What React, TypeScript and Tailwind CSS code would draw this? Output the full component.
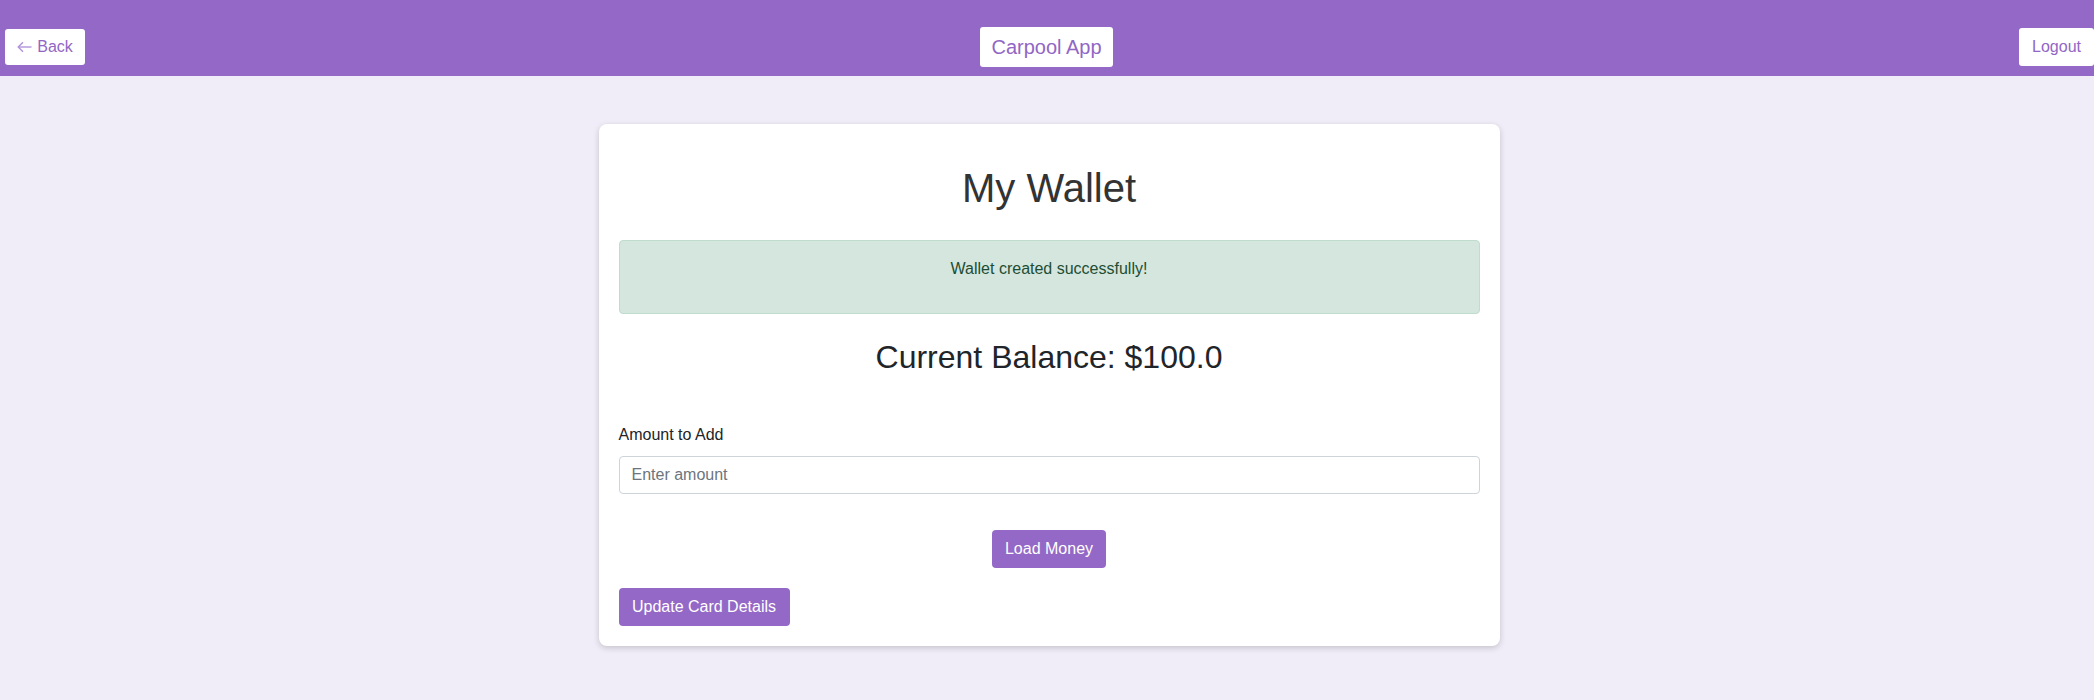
import React from "react";

export default function App() {
  const font = { fontFamily: '"Liberation Sans", Arial, Helvetica, sans-serif' };
  return (
    <div className="min-h-[700px] bg-[#f0edf8]" style={font}>
      <header className="h-[76px] bg-[#9368c6] grid grid-cols-[1fr_auto_1fr] items-center pt-[18px] pl-[5px] pr-0">
        <div className="flex justify-start">
          <button className="h-[36px] w-[80px] bg-white rounded-[3px] text-[#9166c5] text-[16px] flex items-center justify-center gap-[5px]">
            <svg width="15" height="12" viewBox="0 0 15 12" fill="none" stroke="#b392dc" strokeWidth="1.4">
              <path d="M14.5 6H1.2" />
              <path d="M6 1.2L1.2 6L6 10.8" />
            </svg>
            <span>Back</span>
          </button>
        </div>
        <div className="h-[40px] w-[133px] mr-[6px] bg-white rounded-[3px] text-[#9166c5] text-[20px] flex items-center justify-center">
          Carpool App
        </div>
        <div className="flex justify-end">
          <button className="h-[38px] w-[75px] bg-white rounded-[3px] text-[#9166c5] text-[16px] flex items-center justify-center">
            Logout
          </button>
        </div>
      </header>

      <main className="pt-[48px] pb-[54px] pl-[4px]">
        <div className="mx-auto w-[901px] bg-white rounded-[8px] shadow-[0_2px_6px_rgba(0,0,0,0.18)] p-[20px]">
          <h1 className="mt-[20px] text-center text-[40px] leading-[48px] text-[#333333]">My Wallet</h1>
          <div className="mt-[28px] border border-[#bfdccd] bg-[#d4e6de] rounded-[4px] px-[16px] pt-[16px] pb-[32px] text-center text-[16px] leading-[24px] text-[#1e4d33]">
            Wallet created successfully!
          </div>
          <h2 className="mt-[24px] text-center text-[32px] leading-[38px] text-[#212529]">Current Balance: $100.0</h2>
          <div className="mt-[47px]">
            <label className="block text-[16px] leading-[24px] text-[#212529]">Amount to Add</label>
            <input
              type="number"
              placeholder="Enter amount"
              className="mt-[9px] block w-full h-[38px] border border-[#ced4da] rounded-[4px] px-[12px] text-[16px] text-[#212529] placeholder:text-[#6c757d] outline-none"
            />
          </div>
          <div className="mt-[36px] flex justify-center">
            <button className="h-[38px] w-[114px] bg-[#9368c6] text-white text-[16px] rounded-[4px]">Load Money</button>
          </div>
          <div className="mt-[20px]">
            <button className="h-[38px] w-[171px] bg-[#9368c6] text-white text-[16px] rounded-[4px]">Update Card Details</button>
          </div>
        </div>
      </main>
    </div>
  );
}
